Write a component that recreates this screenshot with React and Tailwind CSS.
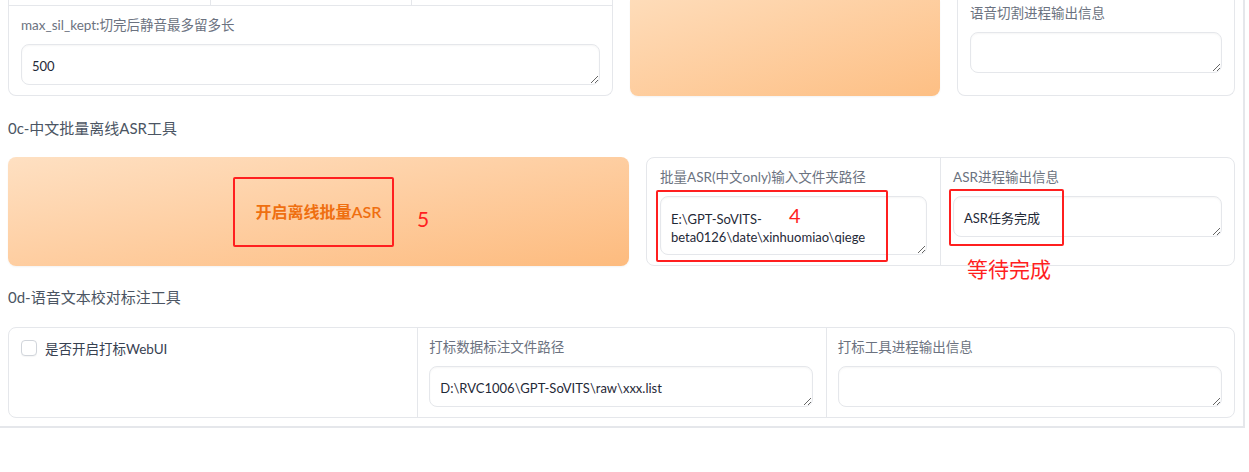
import React from "react";

const font = { fontFamily: '"Lato", "Noto Sans CJK SC", sans-serif' };

function Label({ children, className = "" }) {
  return (
    <div className={"text-[13.5px] leading-[18px] text-[#6b7280] " + className}>
      {children}
    </div>
  );
}

function Area({ value = "", className = "" }) {
  return (
    <textarea
      readOnly
      value={value}
      className={
        "block w-full resize-y rounded-[8px] border border-[#e5e7eb] bg-white px-[10px] pt-[12px] pb-[8px] text-[13px] leading-[19px] text-[#1f2937] shadow-[inset_0_1px_2px_rgba(0,0,0,0.04)] outline-none " +
        className
      }
      style={font}
    />
  );
}

export default function App() {
  return (
    <div
      className="relative w-[1245px] border-r-2 border-b-2 border-[#e5e7eb] bg-white px-[8px] pb-[8px]"
      style={font}
    >
      {/* Row 1 (top clipped) */}
      <div className="flex h-[96px] gap-[17px]">
        <div className="flex w-[605px] flex-col rounded-b-[8px] border-x border-b border-[#e5e7eb]">
          <div className="grid h-[6px] grid-cols-3 border-b border-[#e5e7eb]">
            <div />
            <div className="border-l border-[#e5e7eb]" />
            <div className="border-l border-[#e5e7eb]" />
          </div>
          <div className="px-[12px] pt-[10px]">
            <Label>max_sil_kept:切完后静音最多留多长</Label>
            <Area value="500" className="mt-[10px] h-[41px]" />
          </div>
        </div>
        <div className="w-[310px] rounded-b-[8px] bg-gradient-to-br from-[#fedcb9] to-[#fdbf84] shadow-[0_1px_2px_rgba(0,0,0,0.05)]" />
        <div className="w-[278px] rounded-b-[8px] border-x border-b border-[#e5e7eb] px-[12px] pt-[4px]">
          <Label>语音切割进程输出信息</Label>
          <Area className="mt-[10px] h-[41px]" />
        </div>
      </div>

      {/* Heading 0c */}
      <div className="mt-[21px] text-[15px] leading-[22px] text-[#4b5563]">
        0c-中文批量离线ASR工具
      </div>

      {/* Row 2 */}
      <div className="mt-[18px] flex h-[109px] gap-[17px]">
        <button className="flex w-[621px] items-center justify-center rounded-[8px] bg-gradient-to-br from-[#fee0c2] to-[#fdbb7e] text-[16px] font-semibold text-[#ef6f10] shadow-[0_1px_2px_rgba(0,0,0,0.05)]">
          开启离线批量ASR
        </button>
        <div className="flex w-[589px] rounded-[8px] border border-[#e5e7eb]">
          <div className="w-[294px] border-r border-[#e5e7eb] px-[13px] pt-[10px]">
            <Label>批量ASR(中文only)输入文件夹路径</Label>
            <Area
              value={"E:\\GPT-SoVITS-\nbeta0126\\date\\xinhuomiao\\qiege"}
              className="mt-[10px] h-[59px] !leading-[18px] !pt-[13px]"
            />
          </div>
          <div className="flex-1 px-[12px] pt-[10px]">
            <Label>ASR进程输出信息</Label>
            <Area value="ASR任务完成" className="mt-[10px] h-[41px]" />
          </div>
        </div>
      </div>

      {/* Heading 0d */}
      <div className="mt-[20px] text-[15px] leading-[22px] text-[#4b5563]">
        0d-语音文本校对标注工具
      </div>

      {/* Row 3 */}
      <div className="mt-[19px] grid h-[91px] grid-cols-3 rounded-[8px] border border-[#e5e7eb]">
        <div className="flex items-start gap-[8px] pl-[12px] pt-[12px]">
          <div className="h-[16px] w-[16px] rounded-[4px] border border-[#d1d5db] bg-white shadow-[0_1px_1px_rgba(0,0,0,0.04)]" />
          <span className="text-[13.5px] leading-[18px] text-[#374151]">是否开启打标WebUI</span>
        </div>
        <div className="border-l border-[#e5e7eb] pl-[11px] pr-[13px] pt-[10px]">
          <Label>打标数据标注文件路径</Label>
          <Area value={"D:\\RVC1006\\GPT-SoVITS\\raw\\xxx.list"} className="mt-[10px] h-[41px]" />
        </div>
        <div className="border-l border-[#e5e7eb] pl-[11px] pr-[12px] pt-[10px]">
          <Label>打标工具进程输出信息</Label>
          <Area className="mt-[10px] h-[41px]" />
        </div>
      </div>

      {/* Red annotations */}
      <div className="pointer-events-none absolute left-[233px] top-[177px] h-[70px] w-[161px] rounded-[2px] border-2 border-[#ff1f1f]" />
      <div className="pointer-events-none absolute left-[417px] top-[206px] text-[21px] leading-[26px] text-[#ff1f1f]">5</div>
      <div className="pointer-events-none absolute left-[656px] top-[190px] h-[72px] w-[232px] rounded-[2px] border-2 border-[#ff1f1f]" />
      <div className="pointer-events-none absolute left-[789px] top-[202px] text-[20px] leading-[26px] text-[#ff1f1f]">4</div>
      <div className="pointer-events-none absolute left-[949px] top-[189px] h-[57px] w-[115px] rounded-[2px] border-2 border-[#ff1f1f]" />
      <div className="pointer-events-none absolute left-[967px] top-[255px] text-[21px] leading-[28px] text-[#ff1f1f]">等待完成</div>
    </div>
  );
}
